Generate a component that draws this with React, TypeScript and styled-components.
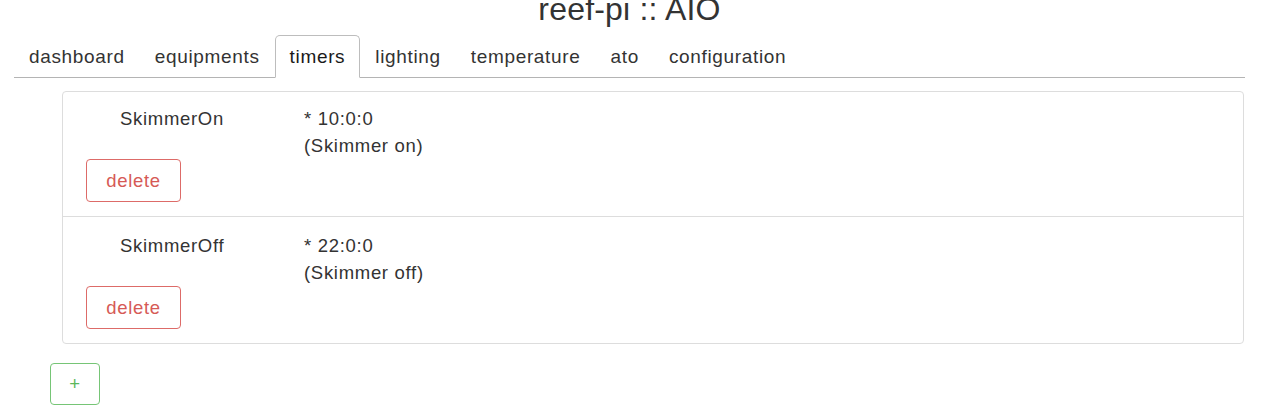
import React from "react";
import styled, { createGlobalStyle } from "styled-components";

const GlobalStyle = createGlobalStyle`
  html, body {
    margin: 0;
    padding: 0;
    background: #ffffff;
  }
  body {
    font-family: "Liberation Sans", Arial, Helvetica, sans-serif;
    color: #333333;
    overflow: hidden;
  }
  * { box-sizing: border-box; }
`;

const Page = styled.div`
  width: 1231px;
  margin-left: 14px;
`;

const Title = styled.h1`
  margin: -9px 0 0;
  text-align: center;
  font-size: 32px;
  line-height: 36px;
  font-weight: 400;
  color: #333333;
  letter-spacing: 0.2px;
`;

const TabList = styled.ul`
  list-style: none;
  margin: 8px 0 0;
  padding: 0;
  display: flex;
  border-bottom: 1px solid #b4b4b4;
`;

const Tab = styled.li<{ $active?: boolean }>`
  margin-bottom: -1px;
  padding: 8px 14px;
  line-height: 25px;
  font-size: 19px;
  letter-spacing: 0.66px;
  border: 1px solid ${(p) => (p.$active ? "#bdbdbd" : "transparent")};
  border-bottom-color: ${(p) => (p.$active ? "#ffffff" : "transparent")};
  border-radius: 5px 5px 0 0;
  background: ${(p) => (p.$active ? "#ffffff" : "transparent")};
  color: ${(p) => (p.$active ? "#1a1a1a" : "#333333")};
  cursor: pointer;
`;

const Content = styled.div`
  padding-left: 36px;
  padding-top: 13px;
`;

const Card = styled.div`
  margin-left: 12px;
  width: 1182px;
  border: 1px solid #dddddd;
  border-radius: 4px;
`;

const Row = styled.div<{ $first?: boolean }>`
  padding: ${(p) => (p.$first ? "13px" : "15px")} 23px 14px;
  border-top: ${(p) => (p.$first ? "none" : "1px solid #dddddd")};
`;

const Info = styled.div`
  display: grid;
  grid-template-columns: 218px 1fr;
  font-size: 18.5px;
  line-height: 27px;
  letter-spacing: 0.7px;
  color: #333333;
`;

const Name = styled.div`
  padding-left: 34px;
`;

const Schedule = styled.div`
  display: flex;
  flex-direction: column;
`;

const OutlineButton = styled.button<{ $tone: "danger" | "success" }>`
  display: inline-flex;
  align-items: center;
  justify-content: center;
  height: ${(p) => (p.$tone === "danger" ? "43px" : "42px")};
  width: ${(p) => (p.$tone === "danger" ? "95px" : "50px")};
  padding: 0;
  background: #ffffff;
  border: 1px solid ${(p) => (p.$tone === "danger" ? "#dd6b68" : "#76c576")};
  border-radius: 4px;
  color: ${(p) => (p.$tone === "danger" ? "#d65a56" : "#5cb85c")};
  font-family: inherit;
  font-size: 18.5px;
  letter-spacing: 0.7px;
  cursor: pointer;
`;

const AddWrap = styled.div`
  margin-top: 19px;
`;

const timers = [
  { name: "SkimmerOn", schedule: "* 10:0:0", desc: "(Skimmer on)" },
  { name: "SkimmerOff", schedule: "* 22:0:0", desc: "(Skimmer off)" },
];

const tabs = [
  "dashboard",
  "equipments",
  "timers",
  "lighting",
  "temperature",
  "ato",
  "configuration",
];

export default function App() {
  return (
    <>
      <GlobalStyle />
      <Page>
        <Title>reef-pi :: AIO</Title>
        <TabList>
          {tabs.map((t) => (
            <Tab key={t} $active={t === "timers"}>
              {t}
            </Tab>
          ))}
        </TabList>
        <Content>
          <Card>
            {timers.map((t, i) => (
              <Row key={t.name} $first={i === 0}>
                <Info>
                  <Name>{t.name}</Name>
                  <Schedule>
                    <span>{t.schedule}</span>
                    <span>{t.desc}</span>
                  </Schedule>
                </Info>
                <OutlineButton $tone="danger">delete</OutlineButton>
              </Row>
            ))}
          </Card>
          <AddWrap>
            <OutlineButton $tone="success">+</OutlineButton>
          </AddWrap>
        </Content>
      </Page>
    </>
  );
}
